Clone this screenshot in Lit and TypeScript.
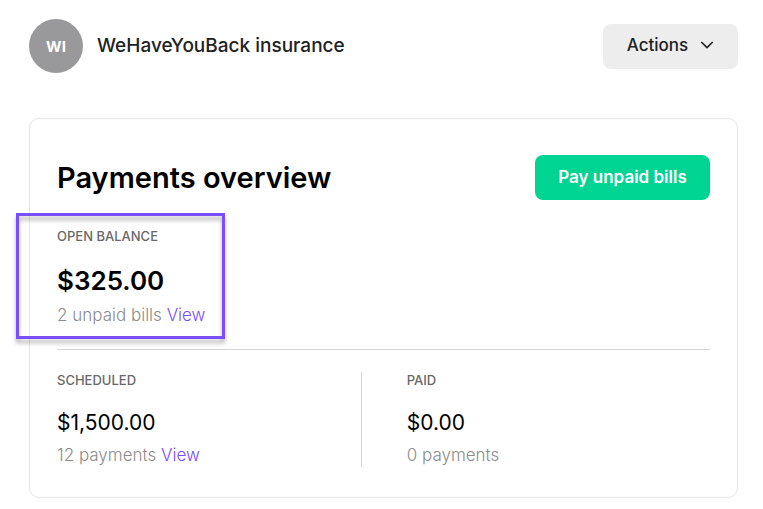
import { LitElement, html, css, nothing } from "lit";
import { customElement, property } from "lit/decorators.js";

@customElement("balance-figure")
class BalanceFigure extends LitElement {
  @property() label = "";
  @property() amount = "";
  @property() note = "";
  @property({ type: Boolean }) linked = false;
  @property({ type: Boolean, reflect: true }) strong = false;

  static styles = css`
    :host {
      display: block;
    }
    .label {
      margin: 0;
      font-size: 13px;
      line-height: 16px;
      font-weight: 500;
      color: #686868;
    }
    .amount {
      margin: 19px 0 4px;
      font-size: 21px;
      line-height: 32px;
      font-weight: 400;
      color: #000;
    }
    :host([strong]) .amount {
      font-size: 26px;
      line-height: 36px;
      font-weight: 600;
    }
    .note {
      margin: 0;
      font-size: 17px;
      line-height: 24px;
      font-weight: 300;
      color: #8c8c8c;
    }
    a {
      color: #7a4dff;
      text-decoration: none;
    }
  `;

  render() {
    return html`
      <h3 class="label">${this.label}</h3>
      <p class="amount">${this.amount}</p>
      <p class="note">${this.note}${this.linked ? html` <a href="#">View</a>` : nothing}</p>
    `;
  }
}

@customElement("app-root")
class AppRoot extends LitElement {
  static styles = css`
    :host {
      display: block;
      box-sizing: border-box;
      padding: 19px 25px 11px 29px;
      background: #fff;
      font-family: Inter, "Open Sans", sans-serif;
      color: #202124;
    }
    * {
      box-sizing: border-box;
    }
    header,
    .top {
      display: flex;
      align-items: center;
      justify-content: space-between;
    }
    header {
      margin-bottom: 45px;
    }
    .vendor {
      display: flex;
      align-items: center;
      gap: 14px;
    }
    .avatar {
      display: grid;
      place-items: center;
      width: 54px;
      height: 54px;
      border-radius: 50%;
      background: #99999b;
      color: #fff;
      font-size: 15px;
      font-weight: 700;
    }
    .name {
      margin: 0;
      font-size: 19px;
      line-height: 24px;
      font-weight: 500;
    }
    button {
      display: flex;
      align-items: center;
      justify-content: center;
      height: 45px;
      padding: 0 0 2px;
      border: 0;
      border-radius: 8px;
      font-family: inherit;
      font-size: 17px;
      line-height: 24px;
      white-space: nowrap;
    }
    .actions {
      gap: 12px;
      width: 135px;
      background: #ededed;
      color: #202124;
      font-weight: 500;
    }
    .pay {
      width: 175px;
      background: #00d492;
      color: #fff;
      font-weight: 600;
    }
    .card {
      padding: 36px 27px 30px;
      border: 1px solid #e6e6e6;
      border-radius: 10px;
    }
    h2 {
      margin: 0;
      font-size: 29px;
      line-height: 40px;
      font-weight: 600;
      color: #000;
    }
    .open {
      position: relative;
      padding: 28px 0 22px;
      border-bottom: 1px solid #d4d4d4;
    }
    .callout {
      position: absolute;
      top: 13px;
      left: -41px;
      width: 209px;
      height: 126px;
      border: 3px solid #7a4dff;
      filter: drop-shadow(0 4px 2px rgba(0, 0, 0, 0.3));
      pointer-events: none;
    }
    .split {
      display: grid;
      grid-template-columns: 20fr 23fr;
      padding-top: 22px;
    }
    .split balance-figure + balance-figure {
      padding-left: 45px;
      border-left: 1px solid #d4d4d4;
    }
  `;

  render() {
    return html`
      <header>
        <div class="vendor">
          <div class="avatar">WI</div>
          <h1 class="name">WeHaveYouBack insurance</h1>
        </div>
        <button class="actions" type="button">
          Actions
          <svg width="14" height="10" viewBox="0 0 14 10" fill="none" stroke="#202124" stroke-width="1.6" aria-hidden="true">
            <path d="M1.3 2L7 7.6L12.7 2" />
          </svg>
        </button>
      </header>
      <section class="card">
        <div class="top">
          <h2>Payments overview</h2>
          <button class="pay" type="button">Pay unpaid bills</button>
        </div>
        <div class="open">
          <balance-figure strong linked label="OPEN BALANCE" amount="$325.00" note="2 unpaid bills"></balance-figure>
          <div class="callout"></div>
        </div>
        <div class="split">
          <balance-figure linked label="SCHEDULED" amount="$1,500.00" note="12 payments"></balance-figure>
          <balance-figure label="PAID" amount="$0.00" note="0 payments"></balance-figure>
        </div>
      </section>
    `;
  }
}
